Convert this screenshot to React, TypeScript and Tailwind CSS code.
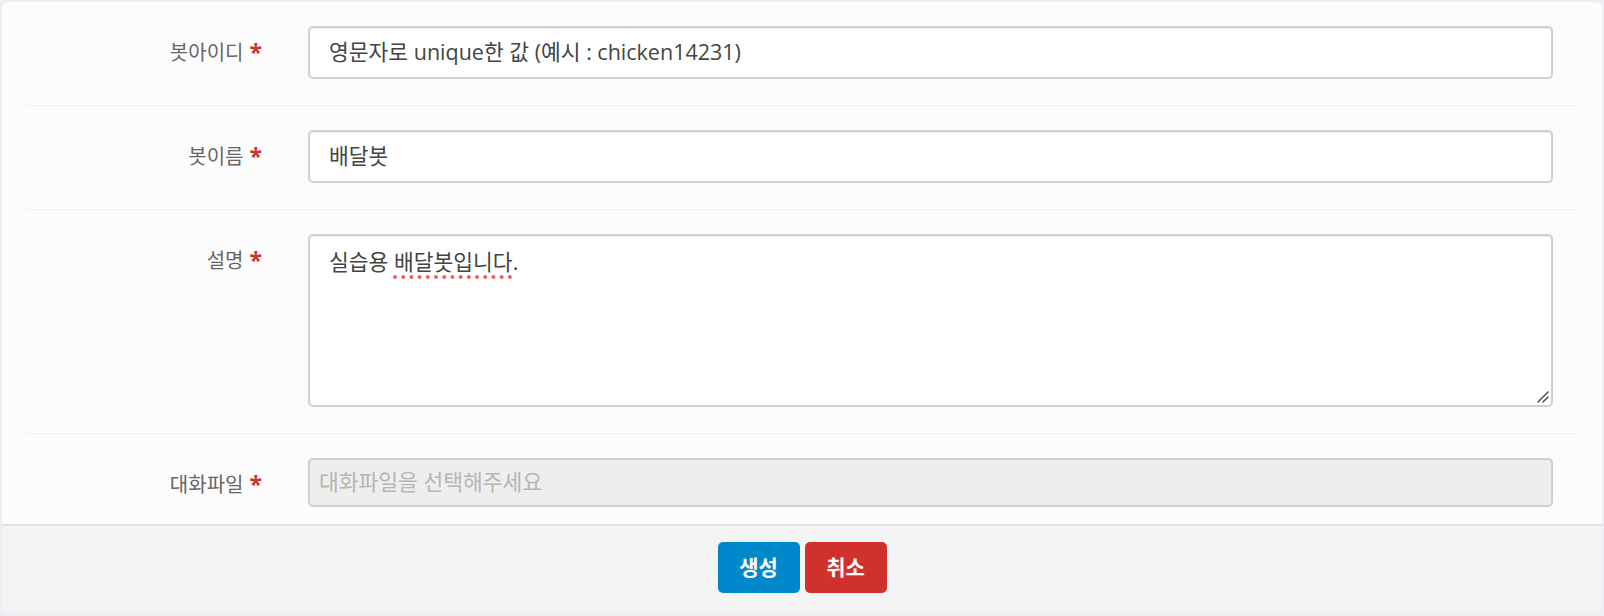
const font = { fontFamily: '"Open Sans", "Noto Sans CJK KR", sans-serif' };

function Label({ text }: { text: string }) {
  return (
    <div className="flex h-[53px] w-[236px] shrink-0 items-center justify-end text-[20px] text-[#666]">
      <span>{text}</span>
      <span className="ml-[6px] text-[23px] font-bold text-[#d0312d]">*</span>
    </div>
  );
}

function Row({ label, children, last }: { label: string; children: React.ReactNode; last?: boolean }) {
  return (
    <div className={"flex items-start gap-[46px] pt-[24px] pb-[26px] " + (last ? "" : "border-b border-[#eef1f5]")}>
      <Label text={label} />
      <div className="flex-1 pr-[25px]">{children}</div>
    </div>
  );
}

export default function App() {
  return (
    <div className="h-screen bg-[#eceef2] p-[2px]" style={font}>
      <div className="flex h-[611px] flex-col overflow-hidden rounded-[6px] bg-[#fcfcfc]">
        <div className="h-[522px] overflow-hidden px-[24px]">
          <Row label="봇아이디">
            <div className="flex h-[53px] items-center rounded-[5px] border-2 border-[#d0d0d0] bg-white pl-[19px] text-[21.5px] text-[#444] shadow-[inset_0_1px_1px_rgba(0,0,0,0.075)]">
              영문자로 unique한 값 (예시 : chicken14231)
            </div>
          </Row>
          <Row label="봇이름">
            <div className="flex h-[53px] items-center rounded-[5px] border-2 border-[#d0d0d0] bg-white pl-[19px] text-[21.5px] text-[#444] shadow-[inset_0_1px_1px_rgba(0,0,0,0.075)]">
              배달봇
            </div>
          </Row>
          <Row label="설명">
            <div className="relative h-[173px] rounded-[5px] border-2 border-[#d0d0d0] bg-white pt-[10px] pl-[19px] text-[21.5px] text-[#444] shadow-[inset_0_1px_1px_rgba(0,0,0,0.075)]">
              실습용{" "}
              <span className="underline decoration-[#f06060] decoration-dotted decoration-[4px] underline-offset-[5px]">
                배달봇입니다
              </span>
              .
              <svg className="absolute right-[2px] bottom-[2px]" width="14" height="14" viewBox="0 0 14 14">
                <path d="M3 13 L13 3 M8 13 L13 8" stroke="#555" strokeWidth="1.6" strokeLinecap="round" />
              </svg>
            </div>
          </Row>
          <Row label="대화파일" last>
            <div className="flex h-[49px] items-center rounded-[5px] border-2 border-[#d0d0d0] bg-[#eeeeee] pl-[9px] text-[21.5px] text-[#b5b5b5]">
              대화파일을 선택해주세요
            </div>
          </Row>
        </div>
        <div className="flex flex-1 items-start justify-center gap-[5px] border-t-2 border-[#e0e0e0] bg-[#f4f4f4] pt-[16px]">
          <button className="h-[51px] w-[82px] rounded-[5px] bg-[#0088cc] text-[21px] font-bold text-white">생성</button>
          <button className="h-[51px] w-[82px] rounded-[5px] bg-[#d0312d] text-[21px] font-bold text-white">취소</button>
        </div>
      </div>
    </div>
  );
}
